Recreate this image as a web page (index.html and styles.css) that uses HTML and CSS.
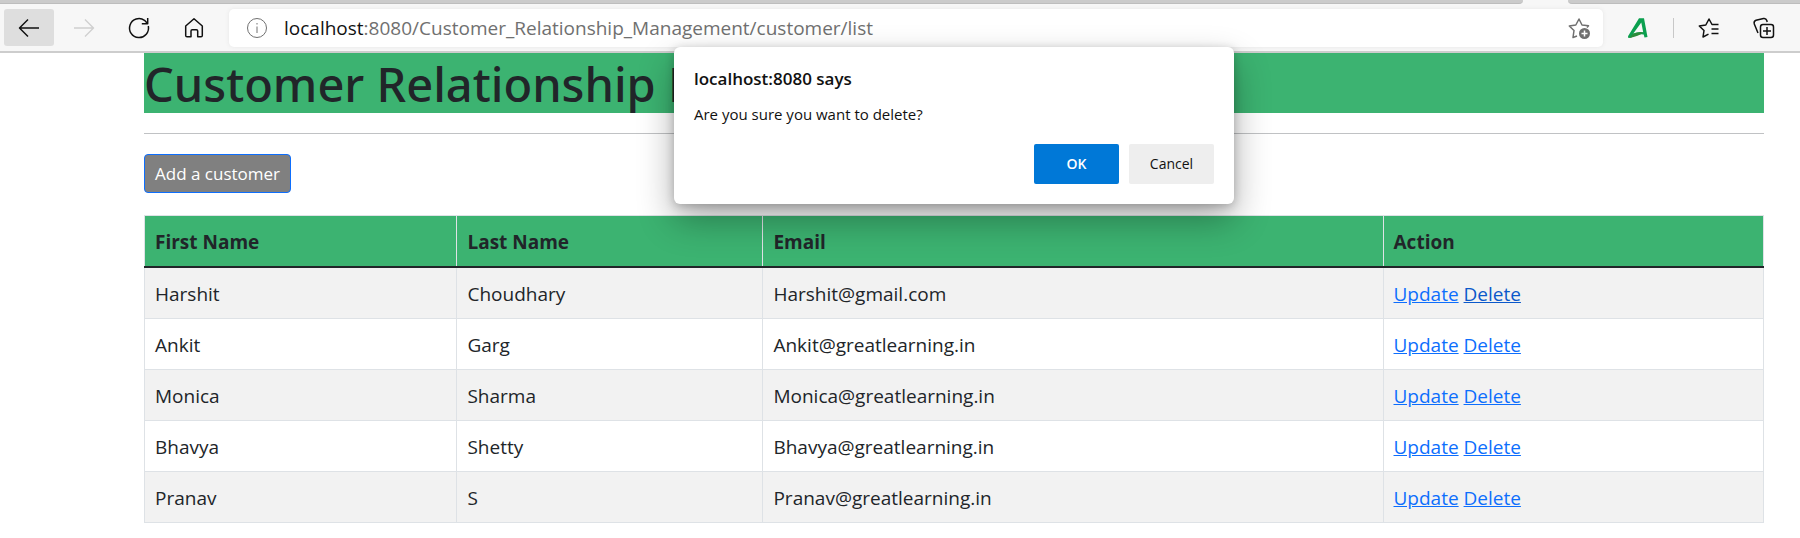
FILE: index.html
```html
<!DOCTYPE html>
<html lang="en">
<head>
<meta charset="utf-8">
<title>Customer Relationship Management</title>
<link rel="stylesheet" href="styles.css">
</head>
<body>
<header class="browser">
  <div class="tab-strip"><span class="tabs-before"></span><span class="tabs-after"></span></div>
  <nav class="toolbar" aria-label="Browser toolbar">
    <button class="tool is-pressed" aria-label="Back"><svg width="24" height="24" viewBox="0 0 24 24"><path d="M22 12H2.500M11 3.500L2.500 12L11 20.500"/></svg></button>
    <button class="tool is-disabled" aria-label="Forward" disabled><svg width="24" height="24" viewBox="0 0 24 24"><path d="M2 12H21.500M13 3.500L21.500 12L13 20.500"/></svg></button>
    <button class="tool" aria-label="Refresh"><svg width="24" height="24" viewBox="0 0 24 24"><path d="M21.300 10A9.500 9.500 0 1 1 17.500 4.300L20.500 7.500M20.700 2V7.700H14.800"/></svg></button>
    <button class="tool" aria-label="Home"><svg width="24" height="24" viewBox="0 0 24 24"><path d="M3.700 10L12 2.700L20.300 10V19.500Q20.300 20.800 19 20.800H15.700V15Q15.700 13.700 14.400 13.700H10.200Q9 13.700 9 15V20.800H5Q3.700 20.800 3.700 19.500Z"/></svg></button>
    <div class="address">
      <svg class="info" width="24" height="24" viewBox="0 0 24 24"><circle cx="12" cy="12" r="9.500"/><path d="M12 10.500V17M12 7V8.500"/></svg>
      <span class="url"><span class="host">localhost</span>:8080/Customer_Relationship_Management/customer/list</span>
      <button class="favorite" aria-label="Add to favorites"><svg width="24" height="24" viewBox="0 0 24 24"><path d="M10 20L6 21.500L7 14.500L2.300 10L8.800 9L12 3L15 9L21.500 9.800L20 11.500"/><circle class="dot" cx="17.500" cy="17.500" r="5.500"/><path class="plus" d="M17.500 14.500V20.500M14.500 17.500H20.500"/></svg></button>
    </div>
    <button class="tool extension" aria-label="Extension"><svg width="24" height="24" viewBox="0 0 24 24"><path class="logo" d="M13 2.300H18L21.500 21L18.500 21.500L17.700 18.500Q11 17.500 5 21.800L2.300 22L2 20.200ZM15.300 6.500L7.300 17.500Q12 15.300 17.200 16.200Z"/><path class="logo-shade" d="M7.300 17.700Q12 15.500 17.200 16.400Q13 20 3 22Z"/></svg></button>
    <span class="divider"></span>
    <button class="tool" aria-label="Favorites"><svg width="24" height="24" viewBox="0 0 24 24"><path d="M11.500 18.200L6 21L7 14.500L2.300 10L8.800 9L12 3L15 8.500H21.500M14.500 13H21.500M14.500 17.500H21.500"/></svg></button>
    <button class="tool" aria-label="Collections"><svg width="24" height="24" viewBox="0 0 24 24"><path d="M6 17L2.300 8Q1.500 5.300 4 4.300L11.500 2.500Q14 2 14.800 4.500L15.200 6"/><rect x="8.500" y="8.500" width="13" height="13" rx="2.500"/><path d="M15 11V19M11 15H19"/></svg></button>
  </nav>
</header>
<main class="page">
  <h1 class="banner">Customer Relationship Management</h1>
  <hr class="rule">
  <button class="add">Add a customer</button>
  <table class="customers">
    <colgroup><col class="col-first"><col class="col-last"><col class="col-email"><col class="col-action"></colgroup>
    <thead><tr><th scope="col">First Name</th><th scope="col">Last Name</th><th scope="col">Email</th><th scope="col">Action</th></tr></thead>
    <tbody>
      <tr><td>Harshit</td><td>Choudhary</td><td>Harshit@gmail.com</td><td><a href="#">Update</a> <a class="is-active" href="#">Delete</a></td></tr>
      <tr><td>Ankit</td><td>Garg</td><td>Ankit@greatlearning.in</td><td><a href="#">Update</a> <a href="#">Delete</a></td></tr>
      <tr><td>Monica</td><td>Sharma</td><td>Monica@greatlearning.in</td><td><a href="#">Update</a> <a href="#">Delete</a></td></tr>
      <tr><td>Bhavya</td><td>Shetty</td><td>Bhavya@greatlearning.in</td><td><a href="#">Update</a> <a href="#">Delete</a></td></tr>
      <tr><td>Pranav</td><td>S</td><td>Pranav@greatlearning.in</td><td><a href="#">Update</a> <a href="#">Delete</a></td></tr>
    </tbody>
  </table>
  <div class="dialog" role="alertdialog" aria-labelledby="dialog-title" aria-describedby="dialog-text">
    <h2 class="dialog-title" id="dialog-title">localhost:8080 says</h2>
    <p class="dialog-text" id="dialog-text">Are you sure you want to delete?</p>
    <div class="dialog-actions"><button class="ok">OK</button><button class="cancel">Cancel</button></div>
  </div>
</main>
</body>
</html>
```
FILE: styles.css
```css
* { box-sizing: border-box; }
body {
  margin: 0;
  background: #fff;
  color: #212529;
  font: 19px/30px "Segoe UI", "Open Sans", "Noto Sans", sans-serif;
}
button { font: inherit; border: 0; padding: 0; background: none; }
svg { display: block; fill: none; stroke: currentColor; stroke-width: 1.5; stroke-linejoin: round; }

.browser { background: #f7f7f7; border-bottom: 2px solid #cdcdcd; }
.tab-strip { display: flex; justify-content: space-between; gap: 45px; height: 4px; }
.tabs-before, .tabs-after { background: #cbcbcb; border-bottom: 1px solid #bdbdbd; }
.tabs-before { flex: 1; border-bottom-right-radius: 4px; }
.tabs-after { flex: 0 0 232px; border-bottom-left-radius: 4px; }
.toolbar { display: flex; align-items: center; gap: 5px; height: 47px; padding: 0 11px 0 4px; }
.tool {
  display: flex; align-items: center; justify-content: center;
  width: 50px; height: 37px; border-radius: 3px; color: #111;
}
.is-pressed { background: #dedede; }
.is-disabled { color: #d0d0d0; }
.address {
  display: flex; align-items: center; flex: 1; gap: 15px; height: 38px;
  margin: 0 5px; padding: 0 12px 0 16px;
  background: #fff; border-radius: 5px; box-shadow: 0 0 4px #e6e6e6; color: #707070;
}
.info { stroke-width: 1; }
.url { flex: 1; white-space: nowrap; }
.host { color: #111; }
.favorite { color: #707070; }
.dot { fill: #707070; stroke: none; }
.plus { stroke: #fff; }
.logo { fill: #0ba04f; fill-rule: evenodd; stroke: none; }
.logo-shade { fill: #2e8b3a; stroke: none; }
.divider { width: 1px; height: 20px; margin: 0 5px; background: #c8c8c8; }

.page { position: relative; margin: 0 2% 0 8%; }
.banner {
  margin: 0; padding-top: 2px; background: #3cb371;
  font-family: "Segoe UI", "Noto Sans", sans-serif; font-size: 47px; font-weight: 500; line-height: 58px;
}
.rule { height: 1px; margin: 20px 0; border: 0; background: #c0c2c4; }
.add {
  display: block; height: 39px; padding: 1px 10px 0; margin-bottom: 22px;
  border: 1px solid #0d6efd; border-radius: 4px; background: #808080; color: #fff; font-size: 17px;
}
.customers { width: 100%; border-collapse: collapse; table-layout: fixed; }
.col-first { width: 19.3%; }
.col-last { width: 18.9%; }
.col-email { width: 38.3%; }
.customers th, .customers td { padding: 11px 10px 9px; border: 1px solid #dee2e6; text-align: left; }
.customers th { background: #3cb371; font-weight: 700; }
.customers thead th { border-bottom: 2px solid #212529; }
.customers tbody tr:nth-child(odd) { background: #f2f2f2; }
.customers a { color: #0d6efd; }
.customers .is-active { color: #0a58ca; }

.dialog {
  position: absolute; top: -6px; left: 50%; width: 560px; padding: 17px 20px 20px;
  transform: translateX(-50%);
  background: #fff; border-radius: 6px; box-shadow: 0 16px 36px rgba(0,0,0,.32), 0 2px 10px rgba(0,0,0,.22);
  color: #111;
}
.dialog-title { margin: 0; font-size: 17px; font-weight: 600; line-height: 30px; }
.dialog-text { margin: 8px 0 17px; font-size: 15px; line-height: 25px; }
.dialog-actions { display: flex; justify-content: flex-end; gap: 10px; }
.ok, .cancel { width: 85px; height: 40px; border-radius: 2px; background: #eee; color: #111; font-size: 14px; }
.ok { background: #0078d7; color: #fff; font-weight: 600; }
```
